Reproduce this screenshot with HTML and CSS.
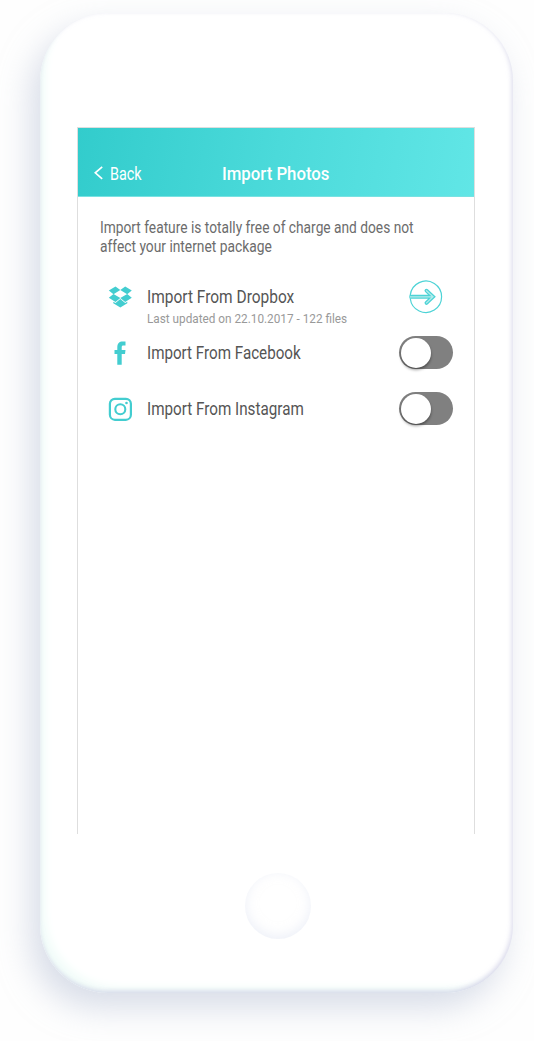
FILE: index.html
```html
<!DOCTYPE html>
<html lang="en">
<head>
<meta charset="utf-8">
<title>Import Photos</title>
<link rel="stylesheet" href="styles.css">
</head>
<body>
<div class="phone">
  <main class="screen">
    <header class="bar">
      <a class="back">
        <svg class="chevron" width="10" height="14" viewBox="0 0 10 14"><path d="M9.200 .8 2.300 6.800l6.900 6" fill="none" stroke="#fff" stroke-width="1.700"/></svg>
        <span class="fit back-text">Back</span>
      </a>
      <h1 class="fit title">Import Photos</h1>
    </header>
    <p class="intro"><span class="fit intro-one">Import feature is totally free of charge and does not</span><span class="fit intro-two">affect your internet package</span></p>
    <ul class="list">
      <li class="row">
        <svg class="icon" width="24" height="24" viewBox="0 0 24 24" fill="#43cdd0"><path d="M7.500 1.500 12.300 5 5.500 9.200 .8 5.500zM17.200 1.500 12.300 5l6.900 4.200 4.600-3.700zM5.500 9l6.800 4-4.800 3.900L.8 12.800zM19.200 9l-6.900 4 4.900 3.900 6.600-4.100z"/><path d="M12.300 14.100 7.500 18 5.300 16.800v1.500L12.300 22.400l7-4.100v-1.500L17.200 18z"/></svg>
        <div class="labels"><span class="fit label dropbox">Import From Dropbox</span><span class="fit sub">Last updated on 22.10.2017 - 122 files</span></div>
        <svg class="go" width="34" height="34" viewBox="0 0 34 34" fill="none" stroke="#4dd3d6" stroke-linecap="round"><path d="M1.300 14.900A15.700 15.700 0 1 1 1.300 18.700" stroke-width="1.200"/><path d="M2 16.800H23.500M17.500 10.700 24 16.800 17.500 22.900" stroke-width="3.900"/><path d="M1 16.800H23.500M17.500 10.700 24 16.800 17.500 22.900" stroke="#b5ecec" stroke-width="1.300"/></svg>
      </li>
      <li class="row">
        <svg class="icon" width="24" height="24" viewBox="0 0 24 24" fill="#43cdd0"><path d="M9.300 23.800V13H6.500V9h2.800V6.500C9.300 2.500 11.200.6 14.800.6h2.700V4.500h-2.100c-1.300 0-1.700.6-1.700 2V9h3.800l-.5 4h-3.300v10.800z"/></svg>
        <div class="labels"><span class="fit label facebook">Import From Facebook</span></div>
        <span class="switch"></span>
      </li>
      <li class="row">
        <svg class="icon" width="24" height="24" viewBox="0 0 24 24" fill="none" stroke="#43cdd0"><rect x="1.900" y="1.800" width="21" height="21" rx="5" stroke-width="2.200"/><circle cx="12.300" cy="12.200" r="5" stroke-width="2.100"/><circle cx="18.500" cy="6" r="1.300" fill="#43cdd0" stroke="none"/></svg>
        <div class="labels"><span class="fit label instagram">Import From Instagram</span></div>
        <span class="switch"></span>
      </li>
    </ul>
  </main>
  <div class="home"></div>
</div>
</body>
</html>
```
FILE: styles.css
```css
* { box-sizing: border-box; }
body {
  margin: 0;
  height: 1041px;
  overflow: hidden;
  background: #fefefe;
  padding: 13px 0 0 40px;
  font-family: Roboto, sans-serif;
}
.phone {
  width: 473px;
  height: 980px;
  padding: 114px 38px 0 37px;
  border-radius: 68px;
  background: #fff;
  box-shadow:
    inset -1px -2px 5px rgba(190, 190, 220, .6),
    inset 12px -12px 8px -6px #f3fdfa,
    -9px 15px 32px rgba(185, 194, 215, .55);
}
.screen {
  width: 398px;
  height: 707px;
  border: 1px solid #dedede;
  border-bottom: 0;
  background: #fff;
}
.bar {
  height: 69px;
  display: grid;
  grid-template-columns: 144px 1fr;
  padding-top: 34px;
  color: #fff;
  background: linear-gradient(100deg, #32cccc, #4bdada 50%, #61e6e6);
  border-bottom: 1px solid #78e2e2;
}
.back { display: flex; align-items: center; height: 24px; padding-left: 15px; gap: 7px; }
.chevron { margin-bottom: 2px; }
.fit { display: block; width: max-content; white-space: nowrap; transform-origin: 0 50%; }
.back-text { font-size: 18px; line-height: 24px; transform: scaleX(.8); }
.title { margin: 0; font-size: 18px; font-weight: 500; line-height: 24px; transform: scaleX(.932); }
.intro { margin: 21px 0 0 22px; height: 38px; font-size: 16px; line-height: 19px; color: #6c6c6c; }
.intro-one { transform: scaleX(.859); }
.intro-two { transform: scaleX(.862); }
.list { list-style: none; margin: 13px 0 0; padding: 0 21px 0 30px; }
.row { height: 56px; display: flex; align-items: flex-start; padding-top: 11px; }
.icon { flex: none; margin-top: 5px; }
.labels { flex: 1; margin-left: 15px; min-width: 0; }
.label { font-size: 17.500px; line-height: 34px; color: #555; }
.dropbox { transform: scaleX(.884); }
.facebook { transform: scaleX(.867); }
.instagram { transform: scaleX(.87); }
.sub { margin-top: -3px; font-size: 13px; line-height: 16px; color: #999; transform: scaleX(.905); }
.go { flex: none; margin-right: 10px; }
.switch {
  flex: none;
  width: 54px;
  height: 33px;
  padding: 2px;
  border-radius: 17px;
  background: #808080;
}
.switch::before {
  content: "";
  display: block;
  width: 30px;
  height: 30px;
  border-radius: 50%;
  background: #fff;
  box-shadow: 0 2px 3px rgba(0, 0, 0, .4);
}
.home {
  width: 66px;
  height: 66px;
  margin: 39px 0 0 168px;
  border-radius: 50%;
  background: #fff;
  box-shadow: inset 0 -3px 12px rgba(220, 225, 242, .5);
}
```
